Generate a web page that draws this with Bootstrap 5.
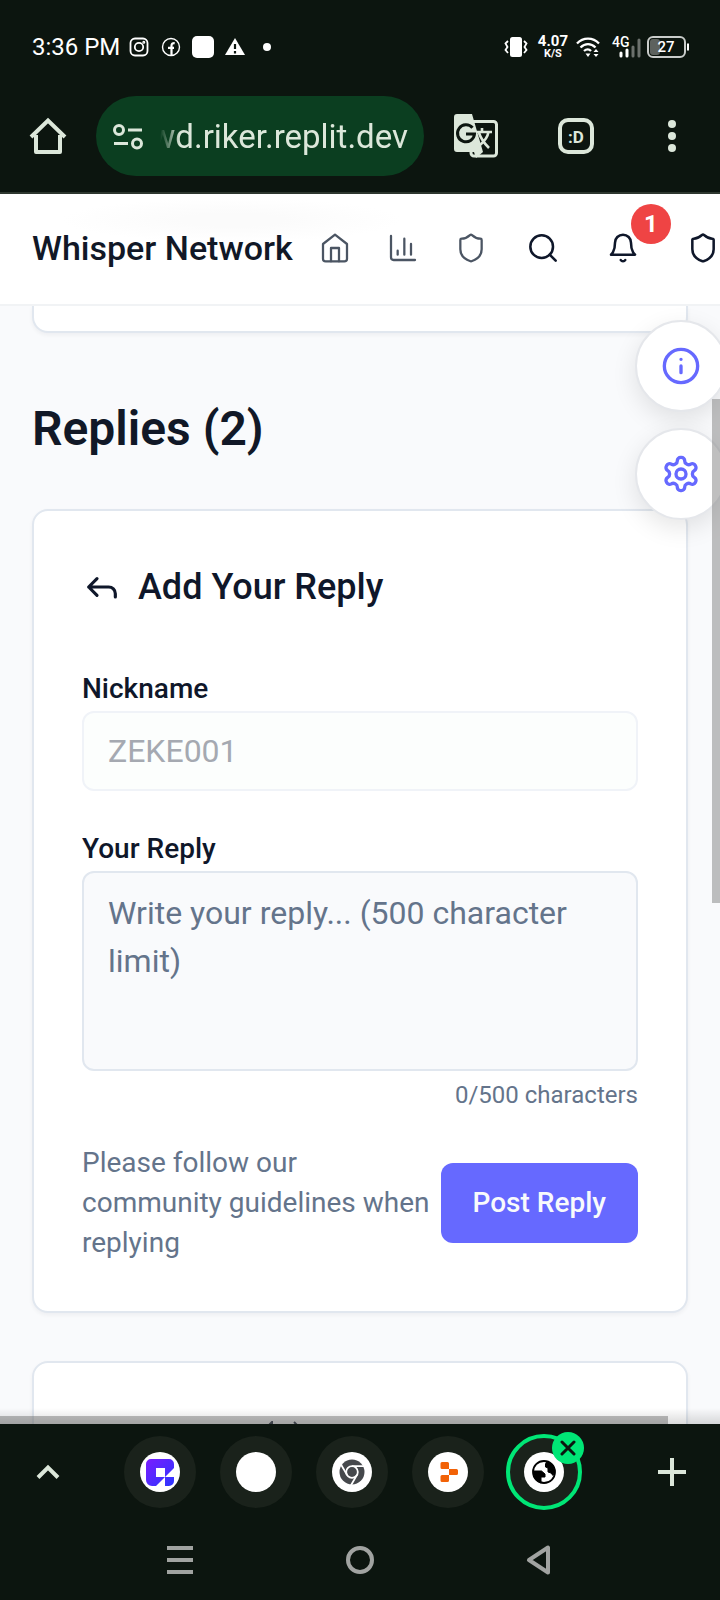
<!DOCTYPE html>
<html lang="en">
<head>
<meta charset="utf-8">
<meta name="viewport" content="width=device-width, initial-scale=1">
<title>Whisper Network</title>
<link href="https://cdn.jsdelivr.net/npm/bootstrap@5.3.0/dist/css/bootstrap.min.css" rel="stylesheet">
<style>
  body { font-family: Roboto, "Noto Sans CJK SC", sans-serif; background: #0c150f; color: #0f172a; overflow: hidden; }
  svg { display: block; flex: none; }
  .line { fill: none; stroke: currentColor; stroke-linecap: round; stroke-linejoin: round; }
  .plain { border: 0; background: none; padding: 0; color: inherit; display: flex; align-items: center; justify-content: center; flex: none; }

  /* phone status bar */
  .status { height: 80px; padding: 14px 30px 0 32px; color: #fff; }
  .clock { font-size: 24px; line-height: 32px; margin-right: 3px; }
  .slot { width: 32px; display: flex; justify-content: center; }
  .rate { font-size: 15px; line-height: 13px; font-weight: 700; text-align: center; margin: 0 8px 0 10px; }
  .rate span { display: block; font-size: 11px; line-height: 11px; }

  /* browser toolbar */
  .toolbar { height: 114px; padding: 16px 0; border-bottom: 2px solid #2e372f; color: #dce7da; }
  .tool { width: 96px; height: 80px; }
  .tool-wide { width: 104px; height: 80px; }
  .omnibox { height: 80px; border-radius: 40px; background: #0b3e20; padding: 2px 16px 0; min-width: 0; }
  .omnibox input { min-width: 0; width: 100%; border: 0; outline: 0; background: none; color: #dce7da; font-size: 33px; text-align: right; padding: 0;
    -webkit-mask-image: linear-gradient(90deg, transparent 16px, #000 36px); mask-image: linear-gradient(90deg, transparent 16px, #000 36px); }

  /* site header */
  .site-head { height: 112px; padding: 0 0 2px 32px; border-bottom: 2px solid #f1f3f5; overflow: hidden;
    background: radial-gradient(ellipse 170px 22px at 232px 26px, #fbfbfb 30%, #fff 100%) #fff; }
  .brand { font-size: 34px; line-height: 48px; font-weight: 500; color: #111827; text-decoration: none; white-space: nowrap; flex: 0 0 263px; }
  .site-links { gap: 36px; color: #4b5563; margin: 0 16px 0 24px; }
  .site-links a { color: inherit; }
  .act { width: 80px; height: 80px; position: relative; color: #0f172a; }
  .count { position: absolute; top: -4px; right: -8px; width: 40px; height: 40px; border-radius: 50%; background: #ef4444; color: #fff; font-size: 24px; line-height: 40px; font-weight: 700; }

  /* page */
  .page { background: #f9fafc; min-height: 0; overflow: hidden; position: relative; padding: 0 32px; }
  .panel { background: #fff; border: 2px solid #e1e7ef; border-radius: 16px; box-shadow: 0 2px 4px rgba(15,23,42,.05); }
  .panel-end { height: 27px; border-top: 0; border-radius: 0 0 16px 16px; }
  .panel-next { height: 240px; padding: 58px 228px 0; }
  .replies { font-size: 48px; line-height: 64px; font-weight: 600; color: #111827; margin: 64px 0 48px; }
  .form-panel { padding: 48px; margin-bottom: 48px; }
  .form-title { font-size: 36px; line-height: 56px; font-weight: 500; margin-bottom: 52px; gap: 16px; }
  .lab { display: block; font-size: 28px; line-height: 44px; font-weight: 500; }
  .field { display: block; width: 100%; border: 2px solid #e1e7ef; border-radius: 12px; background: #f9fafc; padding: 14px 24px; font-size: 32px; line-height: 48px; color: #0f172a; }
  .field::placeholder { color: #64748b; opacity: 1; }
  .field:disabled { background: #fcfefd; border-color: #f0f3f8; color: #a5a9b1; margin-bottom: 36px; height: 80px; }
  textarea.field { height: 200px; padding-top: 16px; resize: none; }
  .muted { color: #64748b; }
  .chars { font-size: 24px; line-height: 32px; margin: 8px 0 32px; }
  .hint { font-size: 28px; line-height: 40px; }
  .post { flex: none; height: 80px; padding: 0 32px; border: 0; border-radius: 12px; background: #6669ff; color: #f8fafc; font-size: 28px; font-weight: 500; }
  .post:hover { background: #5558ee; color: #fff; }

  /* overlays */
  .floats { position: absolute; top: 14px; right: -7px; display: flex; flex-direction: column; gap: 16px; }
  .float-btn { width: 92px; height: 92px; border-radius: 50%; background: #fff; border: 2px solid #e5e7eb; color: #6669ff; box-shadow: 0 8px 24px rgba(0,0,0,.1); }
  .thumb-v { position: absolute; right: 0; top: 93px; width: 8px; height: 504px; background: rgba(128,128,128,.5); }
  .thumb-h { position: absolute; left: 0; bottom: 0; width: 668px; height: 8px; background: rgba(128,128,128,.5); }
  .fade-edge { position: absolute; left: 0; right: 0; bottom: 0; height: 16px; background: linear-gradient(rgba(0,0,0,0), rgba(0,0,0,.14)); }

  /* tab strip and system keys */
  .strip { height: 96px; color: #dce7da; }
  .tab { width: 96px; height: 96px; position: relative; }
  .tab-disc { width: 72px; height: 72px; border-radius: 50%; background: #1a221b; display: flex; align-items: center; justify-content: center; }
  .tab-on { width: 76px; height: 76px; border: 4px solid #00e676; }
  .shut { position: absolute; right: 8px; top: 8px; width: 32px; height: 32px; border-radius: 50%; background: #00e676; color: #0c150f; display: flex; align-items: center; justify-content: center; }
  .keys { height: 80px; color: #a1a3a1; }
</style>
</head>
<body class="d-flex flex-column vh-100">

<div class="status d-flex align-items-center flex-shrink-0">
  <span class="clock">3:36 PM</span>
  <span class="slot"><svg width="20" height="20" viewBox="0 0 20 20" fill="none" stroke="#fff" stroke-width="1.8"><rect x="1.5" y="1.5" width="17" height="17" rx="4.5"/><circle cx="10" cy="10" r="4.2"/><circle cx="14.8" cy="5.2" r=".6"/></svg></span>
  <span class="slot"><svg width="20" height="20" viewBox="0 0 20 20" fill="none" stroke="#fff"><circle cx="10" cy="10" r="8.5" stroke-width="1.4"/><path d="M10.5 18.5V8.700c0-2 1-2.600 3.200-2.500M7 10.800h6" stroke-width="2.2"/></svg></span>
  <span class="slot"><svg width="22" height="22" viewBox="0 0 22 22"><rect width="22" height="22" rx="5" fill="#fff"/></svg></span>
  <span class="slot"><svg width="20" height="20" viewBox="0 0 20 20"><path d="M10 1 20 18H0z" fill="#fff"/><path d="M10 7v5M10 14v2.400" stroke="#0c150f" stroke-width="2.2"/></svg></span>
  <span class="slot"><svg width="8" height="8" viewBox="0 0 8 8"><circle cx="4" cy="4" r="4" fill="#fff"/></svg></span>
  <div class="d-flex align-items-center ms-auto">
    <svg width="24" height="20" viewBox="0 0 24 20"><rect x="6" width="12" height="20" rx="2.5" fill="#fff"/><path d="M4 4 1.500 6.500 3.500 10 1.500 13 4 16M20 4l2.500 2.500L20.500 10l2 3L20 16" fill="none" stroke="#fff" stroke-width="1.800"/></svg>
    <div class="rate">4.07<span>K/S</span></div>
    <svg width="24" height="22" viewBox="0 0 24 22" fill="none" stroke="#fff" stroke-width="2.300"><path d="M1 7.500C7 1 17 1 23 7.500M4.500 11.500c4.500-4.500 10.500-4.500 15 0M8 15c2.500-2.300 5-2.300 7 0"/><path d="M9.500 17.500h5L12 21zM17.500 16l2.500-3 2.500 3zM17.500 18l2.500 3 2.500-3z" fill="#fff" stroke="none"/></svg>
    <svg class="ms-2" width="38" height="32" viewBox="0 0 38 32"><text x="4" y="16" font-size="14" font-weight="500" fill="#fff">4G</text><g stroke-width="3" stroke-linecap="round"><path d="M13 22v3M19 19v6" stroke="#fff"/><path d="M25 16v9M31 9v16" stroke="#6b706c"/></g></svg>
    <svg width="44" height="24" viewBox="0 0 44 24"><rect x="2" y="2" width="37" height="20" rx="5" fill="none" stroke="#c9ccca" stroke-width="2"/><path d="M42 8.500v7" stroke="#fff" stroke-width="2"/><rect x="4" y="4" width="10" height="16" rx="3" fill="#5d625e"/><text x="20" y="17" font-size="15" font-weight="500" text-anchor="middle" fill="#fff">27</text></svg>
  </div>
</div>

<div class="toolbar d-flex align-items-center flex-shrink-0">
  <button class="plain tool" aria-label="Home"><svg width="38" height="38" viewBox="0 0 38 38" fill="none" stroke="currentColor" stroke-width="4" stroke-linejoin="round"><path d="M7 18v17h24V18"/><path d="M2 20 19 3.500 36 20" stroke-linejoin="miter"/></svg></button>
  <div class="omnibox d-flex align-items-center flex-grow-1">
    <svg width="32" height="28" viewBox="0 0 32 28" fill="none" stroke="currentColor" stroke-width="3"><circle cx="7" cy="7" r="4.500"/><path d="M16 7h14M2 20.500h14"/><circle cx="25" cy="20.500" r="4.500"/></svg>
    <input type="text" value="wd.riker.replit.dev" aria-label="Address">
  </div>
  <button class="plain tool-wide" aria-label="Translate"><svg width="44" height="44" viewBox="0 0 44 44"><rect x="17" y="7.500" width="25.500" height="34.500" rx="3" fill="none" stroke="currentColor" stroke-width="3"/><path d="M3 0h15l11 38-7 6-2-6H3a3 3 0 0 1-3-3V3a3 3 0 0 1 3-3z" fill="currentColor"/><path d="M18.500 13.800A8.500 8.500 0 1 0 20.500 20h-8.500" fill="none" stroke="#0c150f" stroke-width="3"/><path d="M28 14v3M22 18h16M34.500 18c-1 6-5 10-8.500 13M25 19c2 6 6 11 10 15" fill="none" stroke="currentColor" stroke-width="2.600"/></svg></button>
  <button class="plain tool" aria-label="Tabs"><svg width="36" height="36" viewBox="0 0 36 36"><rect x="2" y="2" width="32" height="32" rx="8" fill="none" stroke="currentColor" stroke-width="4"/><text x="18" y="24.500" text-anchor="middle" font-size="17" font-weight="700" fill="currentColor">:D</text></svg></button>
  <button class="plain tool" aria-label="More"><svg width="8" height="32" viewBox="0 0 8 32" fill="currentColor"><circle cx="4" cy="4" r="4"/><circle cx="4" cy="16" r="4"/><circle cx="4" cy="28" r="4"/></svg></button>
</div>

<header class="site-head d-flex align-items-center flex-shrink-0">
  <a class="brand" href="#">Whisper Network</a>
  <nav class="site-links d-flex">
    <a href="#" aria-label="Home"><svg class="line" width="32" height="32" viewBox="0 0 24 24" stroke-width="1.700"><path d="m3 9 9-7 9 7v11a2 2 0 0 1-2 2H5a2 2 0 0 1-2-2z"/><path d="M9 22V12h6v10"/></svg></a>
    <a href="#" aria-label="Statistics"><svg class="line" width="32" height="32" viewBox="0 0 24 24" stroke-width="1.700"><path d="M3 3v16a2 2 0 0 0 2 2h16M18 17V9M13 17V5M8 17v-3"/></svg></a>
    <a href="#" aria-label="Moderation"><svg class="line" width="32" height="32" viewBox="0 0 24 24" stroke-width="1.700"><path d="M20 13c0 5-3.500 7.500-7.660 8.950a1 1 0 0 1-.67-.01C7.500 20.500 4 18 4 13V6a1 1 0 0 1 1-1c2 0 4.500-1.200 6.240-2.720a1.170 1.170 0 0 1 1.520 0C14.510 3.810 17 5 19 5a1 1 0 0 1 1 1z"/></svg></a>
  </nav>
  <button class="plain act" aria-label="Search"><svg class="line" width="32" height="32" viewBox="0 0 24 24" stroke-width="1.900"><circle cx="11" cy="11" r="8.500"/><path d="m21.500 21.500-4.500-4.500"/></svg></button>
  <button class="plain act" aria-label="Notifications"><svg class="line" width="32" height="32" viewBox="0 0 24 24" stroke-width="1.900"><path d="M6 8a6 6 0 0 1 12 0c0 7 3 9 3 9H3s3-2 3-9M10.300 21a1.940 1.940 0 0 0 3.400 0"/></svg><span class="count">1</span></button>
  <button class="plain act" aria-label="Admin"><svg class="line" width="32" height="32" viewBox="0 0 24 24" stroke-width="1.900"><path d="M20 13c0 5-3.500 7.500-7.660 8.950a1 1 0 0 1-.67-.01C7.500 20.500 4 18 4 13V6a1 1 0 0 1 1-1c2 0 4.500-1.200 6.240-2.720a1.170 1.170 0 0 1 1.520 0C14.510 3.810 17 5 19 5a1 1 0 0 1 1 1z"/></svg></button>
</header>

<main class="page flex-grow-1">
  <section class="panel panel-end"></section>
  <h2 class="replies">Replies (2)</h2>

  <form class="panel form-panel">
    <h3 class="form-title d-flex align-items-center">
      <svg class="line" width="40" height="40" viewBox="0 0 24 24" stroke-width="1.900"><path d="M9 17l-5-5 5-5M20 18v-2a4 4 0 0 0-4-4H4"/></svg>
      Add Your Reply
    </h3>
    <label class="lab" for="nick">Nickname</label>
    <input class="field" id="nick" type="text" value="ZEKE001" disabled>
    <label class="lab" for="reply">Your Reply</label>
    <textarea class="field" id="reply" maxlength="500" placeholder="Write your reply... (500 character limit)"></textarea>
    <div class="chars muted text-end">0/500 characters</div>
    <div class="d-flex align-items-center justify-content-between">
      <p class="hint muted mb-0">Please follow our community guidelines when replying</p>
      <button class="post" type="button">Post Reply</button>
    </div>
  </form>

  <section class="panel panel-next">
    <svg width="40" height="16" viewBox="0 0 40 16"><path d="M6 5 10 1v15M32 1l4 4v11" fill="none" stroke="#0f172a" stroke-width="2"/></svg>
  </section>

  <div class="floats">
    <button class="plain float-btn" aria-label="Information"><svg class="line" width="40" height="40" viewBox="0 0 24 24" stroke-width="2"><circle cx="12" cy="12" r="10"/><path d="M12 16v-4M12 8h.01"/></svg></button>
    <button class="plain float-btn" aria-label="Settings"><svg class="line" width="40" height="40" viewBox="0 0 24 24" stroke-width="2"><path d="M12.220 2h-.44a2 2 0 0 0-2 2v.18a2 2 0 0 1-1 1.730l-.43.25a2 2 0 0 1-2 0l-.15-.08a2 2 0 0 0-2.730.73l-.22.38a2 2 0 0 0 .73 2.730l.15.1a2 2 0 0 1 1 1.720v.51a2 2 0 0 1-1 1.740l-.15.09a2 2 0 0 0-.73 2.730l.22.38a2 2 0 0 0 2.730.73l.15-.08a2 2 0 0 1 2 0l.43.25a2 2 0 0 1 1 1.730V20a2 2 0 0 0 2 2h.44a2 2 0 0 0 2-2v-.18a2 2 0 0 1 1-1.730l.43-.25a2 2 0 0 1 2 0l.15.08a2 2 0 0 0 2.730-.73l.22-.39a2 2 0 0 0-.73-2.730l-.15-.08a2 2 0 0 1-1-1.740v-.5a2 2 0 0 1 1-1.740l.15-.09a2 2 0 0 0 .73-2.730l-.22-.38a2 2 0 0 0-2.730-.73l-.15.08a2 2 0 0 1-2 0l-.43-.25a2 2 0 0 1-1-1.730V4a2 2 0 0 0-2-2z"/><circle cx="12" cy="12" r="3"/></svg></button>
  </div>
  <div class="thumb-v"></div>
  <div class="thumb-h"></div>
  <div class="fade-edge"></div>
</main>

<div class="strip d-flex align-items-center flex-shrink-0">
  <button class="plain tab" aria-label="Show tabs"><svg width="24" height="16" viewBox="0 0 24 16"><path d="M2 13.500 12 3.500l10 10" fill="none" stroke="currentColor" stroke-width="4"/></svg></button>
  <div class="d-flex flex-grow-1 ps-3">
    <button class="plain tab" aria-label="Design tab"><span class="tab-disc"><svg width="40" height="40" viewBox="0 0 40 40"><defs><linearGradient id="vio" x2="1" y2="1"><stop stop-color="#7b1dff"/><stop offset="1" stop-color="#2b36ff"/></linearGradient></defs><circle cx="20" cy="20" r="20" fill="#fff"/><path d="M11 7h18a5 5 0 0 1 5 5v4l-9 9v-9h-9v9h9l-9 9h-4a6 6 0 0 1-6-6V12a5 5 0 0 1 5-5zM25 25h9v4a5 5 0 0 1-5 5h-4z" fill="url(#vio)"/></svg></span></button>
    <button class="plain tab" aria-label="Blank tab"><span class="tab-disc"><svg width="40" height="40" viewBox="0 0 40 40"><circle cx="20" cy="20" r="20" fill="#fff"/></svg></span></button>
    <button class="plain tab" aria-label="Chrome tab"><span class="tab-disc"><svg width="40" height="40" viewBox="0 0 40 40"><circle cx="20" cy="20" r="20" fill="#fff"/><circle cx="20" cy="20" r="12.500" fill="#45484c"/><g fill="none" stroke="#fff" stroke-width="1.800"><circle cx="20" cy="20" r="5.800"/><path d="M20 14.200h12M15 22.900 9 12.500M25 22.900l-6 10.400"/></g></svg></span></button>
    <button class="plain tab" aria-label="Replit tab"><span class="tab-disc"><svg width="40" height="40" viewBox="0 0 40 40"><circle cx="20" cy="20" r="20" fill="#fff"/><path d="M14 10h5.500a1.500 1.500 0 0 1 1.500 1.500V17h-7a1.500 1.500 0 0 1-1.500-1.500v-4A1.500 1.500 0 0 1 14 10zM21 17h7.500a1.500 1.500 0 0 1 1.500 1.500v3a1.500 1.500 0 0 1-1.500 1.500H21zM14 23h7v5.500a1.500 1.500 0 0 1-1.500 1.500H14a1.500 1.500 0 0 1-1.500-1.500v-4A1.500 1.500 0 0 1 14 23z" fill="#f26207"/></svg></span></button>
    <button class="plain tab" aria-label="Current tab"><span class="tab-disc tab-on"><svg width="40" height="40" viewBox="0 0 40 40"><circle cx="20" cy="20" r="20" fill="#fff"/><circle cx="20" cy="20" r="11" fill="#fff" stroke="#000" stroke-width="1.800"/><path d="M23 9.500l-1.500 2.500v3l2.500 1v4l3 1 2 2.500 1.500-3.500c0-5-3-9-7.500-10.500zM9.500 19h8l3.500 3v3h-4v6c-4.500-1.500-7.500-6-7.500-12z" stroke="#000" fill="#000"/></svg></span>
      <span class="shut"><svg width="16" height="16" viewBox="0 0 16 16"><path d="m2 2 12 12M14 2 2 14" stroke="currentColor" stroke-width="3" stroke-linecap="round"/></svg></span></button>
  </div>
  <button class="plain tab" aria-label="New tab"><svg width="28" height="28" viewBox="0 0 28 28"><path d="M14 0v28M0 14h28" stroke="currentColor" stroke-width="4"/></svg></button>
</div>

<div class="keys d-flex justify-content-center flex-shrink-0">
  <button class="plain w-25" aria-label="Recents"><svg width="26" height="28" viewBox="0 0 26 28"><path d="M0 2h26M0 14h26M0 26h26" stroke="currentColor" stroke-width="4"/></svg></button>
  <button class="plain w-25" aria-label="Home screen"><svg width="28" height="28" viewBox="0 0 28 28"><circle cx="14" cy="14" r="12" fill="none" stroke="currentColor" stroke-width="4"/></svg></button>
  <button class="plain w-25" aria-label="Back"><svg width="28" height="30" viewBox="0 0 28 30"><path d="M22 2.500v25L3 15z" fill="none" stroke="currentColor" stroke-width="4" stroke-linejoin="round"/></svg></button>
</div>

<script src="https://cdn.jsdelivr.net/npm/bootstrap@5.3.0/dist/js/bootstrap.bundle.min.js"></script>
</body>
</html>
